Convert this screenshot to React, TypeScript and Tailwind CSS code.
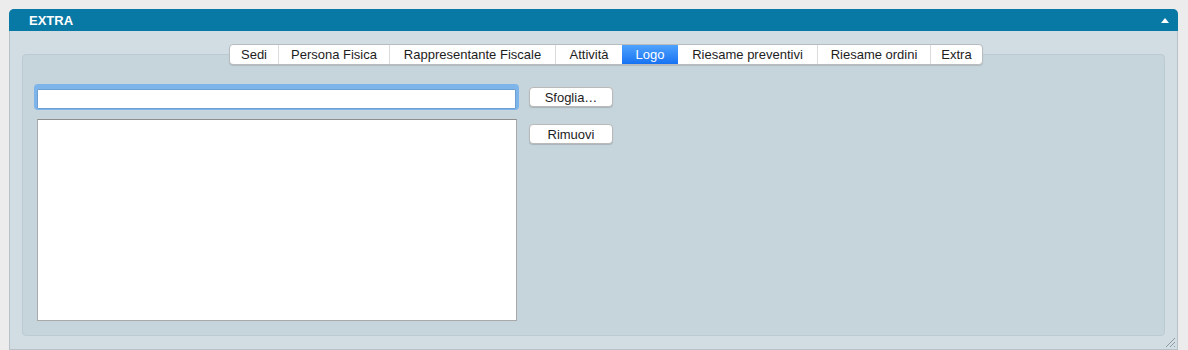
import React from "react";

const tabs = [
  { label: "Sedi", w: "w-[48px]" },
  { label: "Persona Fisica", w: "w-[111px]" },
  { label: "Rappresentante Fiscale", w: "w-[166px]" },
  { label: "Attività", w: "w-[67px]" },
  { label: "Logo", w: "w-[56px]", active: true },
  { label: "Riesame preventivi", w: "w-[139px]" },
  { label: "Riesame ordini", w: "w-[113px]" },
  { label: "Extra", w: "w-[52px]" },
];

const TabBar = () => {
  return (
    <div className="relative z-10 ml-[207px] flex h-[21px] w-fit overflow-hidden rounded-[4px] border border-[#b8bcbf] bg-white shadow-[0_1px_1px_rgba(0,0,0,0.12)]">
      {tabs.map((tab, index) => (
        <div
          key={tab.label}
          className={`${tab.w} flex items-center justify-center text-[13px] leading-none ${
            index > 0 && !tab.active && !tabs[index - 1].active
              ? "border-l border-[#dcdcdc]"
              : ""
          } ${
            tab.active
              ? "bg-gradient-to-b from-[#4ea2fd] to-[#1672f2] text-white"
              : "text-[#1d1d1d]"
          }`}
        >
          {tab.label}
        </div>
      ))}
    </div>
  );
};

const MacButton = ({ label }: { label: string }) => {
  return (
    <button className="flex h-[20px] w-[84px] items-center justify-center rounded-[4px] border border-[#b9b9b9] bg-white text-[13px] leading-none text-[#1d1d1d] shadow-[0_1px_1px_rgba(0,0,0,0.15)]">
      {label}
    </button>
  );
};

const App = () => {
  return (
    <div
      className="h-[350px] w-[1188px] bg-[#ececec] pl-[9px] pr-[10px] pt-[9px]"
      style={{ fontFamily: '"Liberation Sans", Arial, sans-serif' }}
    >
      <div className="relative flex h-[341px] flex-col rounded-t-[5px] border-x border-b border-[#b7c2c8] bg-[#d1dde3]">
        <div className="-mx-px flex h-[22px] items-center justify-between rounded-t-[5px] bg-[#0878a5] pl-[20px] pr-[9px]">
          <span className="text-[13px] font-bold leading-none text-white">
            EXTRA
          </span>
          <svg width="8" height="5" viewBox="0 0 8 5">
            <path d="M0 5 L4 0 L8 5 Z" fill="white" />
          </svg>
        </div>

        <div className="flex flex-1 flex-col px-[12px] pb-[13px] pt-[13px]">
          <TabBar />
          <div className="-mt-[11px] flex flex-1 flex-col rounded-[4px] border border-[#bccad1] bg-[#c6d4db] pl-[11px] pt-[29px]">
            <div className="flex items-center">
              <div className="h-[26px] w-[485px] rounded-[4px] bg-[#7db5eb] p-[3px]">
                <input
                  type="text"
                  className="h-full w-full rounded-[1px] border border-[#6d9fd3] bg-white outline-none"
                />
              </div>
              <div className="ml-[10px]">
                <MacButton label="Sfoglia…" />
              </div>
            </div>
            <div className="mt-[9px] flex items-start">
              <div className="ml-[3px] h-[202px] w-[480px] border border-[#a9a9a9] border-t-[#8e8e8e] bg-white" />
              <div className="ml-[12px] mt-[5px]">
                <MacButton label="Rimuovi" />
              </div>
            </div>
          </div>
        </div>

        <svg
          className="absolute bottom-[1px] right-[1px]"
          width="12"
          height="12"
          viewBox="0 0 12 12"
        >
          <path
            d="M11 2 L2 11 M11 6 L6 11 M11 10 L10 11"
            stroke="#8d9aa1"
            strokeWidth="1"
          />
        </svg>
      </div>
    </div>
  );
};

export default App;
